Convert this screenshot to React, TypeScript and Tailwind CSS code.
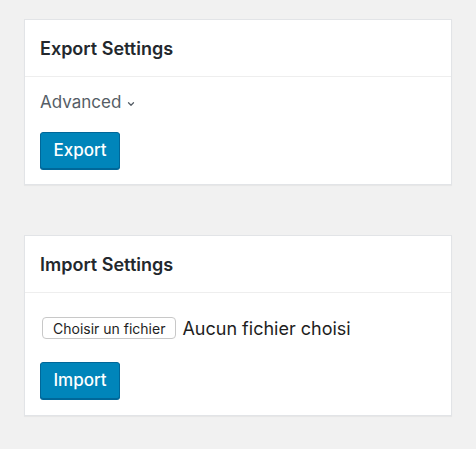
import { ChevronDown } from "lucide-react";

function Card({ title, children }: { title: string; children: React.ReactNode }) {
  return (
    <section className="border border-[#e2e4e7] bg-white shadow-[0_1px_1px_rgba(0,0,0,0.04)]">
      <div className="flex h-[57px] items-center border-b border-[#eeeeee] px-[15px]">
        <h2 className="text-[18px] font-semibold text-[#23282d]">{title}</h2>
      </div>
      {children}
    </section>
  );
}

function BlueButton({ label }: { label: string }) {
  return (
    <button className="flex h-[37px] w-[80px] items-center justify-center rounded-[3px] border border-[#006799] bg-[#0085ba] text-[17px] font-medium text-white shadow-[0_1px_0_#006799]">
      {label}
    </button>
  );
}

export default function App() {
  return (
    <div
      className="min-h-[449px] bg-[#f1f1f1] px-[24px] pt-[19px]"
      style={{ fontFamily: "Inter, 'Noto Sans', sans-serif" }}
    >
      <div className="w-[428px]">
        <Card title="Export Settings">
          <div className="px-[15px] pt-[15px] pb-[15px]">
            <button className="flex h-[22px] items-center gap-[5px] text-[17px] text-[#555d66]">
              Advanced
              <ChevronDown size={10} strokeWidth={3} className="mt-[1px]" />
            </button>
            <div className="mt-[18px]">
              <BlueButton label="Export" />
            </div>
          </div>
        </Card>

        <div className="h-[50px]" />

        <Card title="Import Settings">
          <div className="px-[15px] pt-[24px] pb-[16px]">
            <div className="flex h-[22px] items-center gap-[6px]">
              <span className="ml-[2px] flex h-[22px] items-center rounded-[4px] border border-[#c8c8c8] bg-white px-[10px] text-[14px] text-[#1e1e1e]">
                Choisir un fichier
              </span>
              <span className="text-[18px] text-[#1e1e1e]">Aucun fichier choisi</span>
            </div>
            <div className="mt-[23px]">
              <BlueButton label="Import" />
            </div>
          </div>
        </Card>
      </div>
    </div>
  );
}
